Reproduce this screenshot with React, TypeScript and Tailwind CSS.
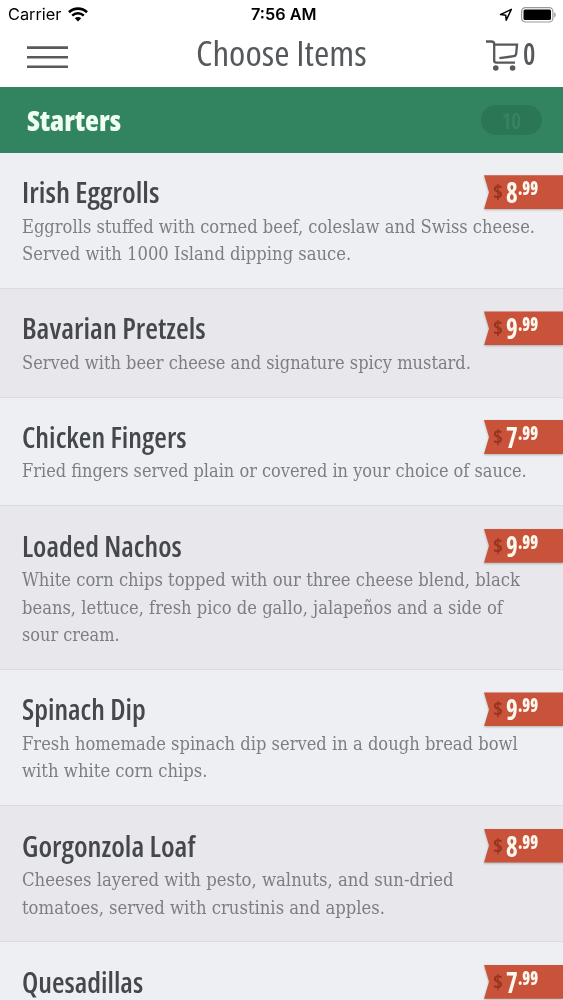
import { useLayoutEffect, useRef, useState } from "react";

type MenuItem = {
  name: string;
  nameWidth: number;
  dollars: string;
  lines: { text: string; width: number }[];
};

const items: MenuItem[] = [
  {
    name: "Irish Eggrolls",
    nameWidth: 137,
    dollars: "8",
    lines: [
      { text: "Eggrolls stuffed with corned beef, coleslaw and Swiss cheese.", width: 513 },
      { text: "Served with 1000 Island dipping sauce.", width: 329 },
    ],
  },
  {
    name: "Bavarian Pretzels",
    nameWidth: 184,
    dollars: "9",
    lines: [
      { text: "Served with beer cheese and signature spicy mustard.", width: 449 },
    ],
  },
  {
    name: "Chicken Fingers",
    nameWidth: 164,
    dollars: "7",
    lines: [
      { text: "Fried fingers served plain or covered in your choice of sauce.", width: 505 },
    ],
  },
  {
    name: "Loaded Nachos",
    nameWidth: 160,
    dollars: "9",
    lines: [
      { text: "White corn chips topped with our three cheese blend, black", width: 498 },
      { text: "beans, lettuce, fresh pico de gallo, jalapeños and a side of", width: 481 },
      { text: "sour cream.", width: 98 },
    ],
  },
  {
    name: "Spinach Dip",
    nameWidth: 124,
    dollars: "9",
    lines: [
      { text: "Fresh homemade spinach dip served in a dough bread bowl", width: 496 },
      { text: "with white corn chips.", width: 186 },
    ],
  },
  {
    name: "Gorgonzola Loaf",
    nameWidth: 173,
    dollars: "8",
    lines: [
      { text: "Cheeses layered with pesto, walnuts, and sun-dried", width: 431 },
      { text: "tomatoes, served with crustinis and apples.", width: 363 },
    ],
  },
  {
    name: "Quesadillas",
    nameWidth: 121,
    dollars: "7",
    lines: [],
  },
];

// Condenses a single line of text to the given width
function FitText({
  text,
  width,
  className = "",
}: {
  text: string;
  width: number;
  className?: string;
}) {
  const ref = useRef<HTMLSpanElement>(null);
  const [scale, setScale] = useState(1);

  useLayoutEffect(() => {
    if (ref.current) setScale(width / ref.current.offsetWidth);
  }, [text, width]);

  return (
    <span className="block" style={{ width }}>
      <span
        ref={ref}
        className={`inline-block origin-left whitespace-nowrap align-top ${className}`}
        style={{ transform: `scaleX(${scale})` }}
      >
        {text}
      </span>
    </span>
  );
}

function StatusBar() {
  return (
    <div className="grid h-[29px] grid-cols-3 items-center pr-[7px] pl-2 font-['Inter',sans-serif] text-[16px] leading-[29px] text-black">
      <div className="flex items-center gap-[7px]">
        <FitText text="Carrier" width={53} />
        <svg width="20" height="15" viewBox="0 0 20 15" fill="none" stroke="#000">
          <path d="M1 5.2a13 13 0 0 1 18 0" strokeWidth="2.7" />
          <path d="M4.2 8.6a8.4 8.4 0 0 1 11.6 0" strokeWidth="2.5" />
          <path d="M6.8 11.2a4.6 4.6 0 0 1 6.4 0L10 14.5Z" fill="#000" stroke="none" />
        </svg>
      </div>
      <div className="flex justify-center pl-1">
        <FitText text="7:56 AM" width={66} className="font-semibold" />
      </div>
      <div className="flex items-center justify-end gap-2">
        <svg width="14" height="14" viewBox="0 0 14 14" fill="none">
          <path d="M1.5 6.6 12.3 1.4 7.2 12.2 6.7 7.2Z" stroke="#000" strokeWidth="1.5" strokeLinejoin="round" />
        </svg>
        <svg width="35" height="16" viewBox="0 0 35 16">
          <rect x="0.6" y="0.6" width="31.3" height="14.4" rx="3.8" fill="none" stroke="#999" strokeWidth="1.2" />
          <rect x="2.5" y="2.5" width="27.5" height="10.6" rx="1.6" fill="#000" />
          <path d="M33.2 5.2c2 .8 2 4.4 0 5.2Z" fill="#999" />
        </svg>
      </div>
    </div>
  );
}

function Header() {
  return (
    <header className="flex h-[58px] items-start justify-between pr-7 pl-[27px] text-[#55595b]">
      <svg className="mt-[17px]" width="41" height="23" viewBox="0 0 41 23" stroke="#58595b" strokeWidth="2.6">
        <path d="M0 1.6h41M0 11.2h41M0 20.7h41" />
      </svg>
      <h1 className="ml-[9px] text-[34px] leading-[48px]">
        <FitText text="Choose Items" width={171} />
      </h1>
      <div className="mt-[9px] flex">
        <svg width="34" height="34" viewBox="0 0 34 34" fill="none" stroke="#55595b" strokeWidth="2.3">
          <path d="M1 3.5h5.2q3 0 3 2.4v16.6q0 2.1 2.2 2.1H30" />
          <path d="M9.2 6.6H32l-.8 8.7q-.3 2.6-2.4 2.9L14.4 20.2" />
          <circle cx="10.8" cy="30" r="2.8" fill="#55595b" stroke="none" />
          <circle cx="27.6" cy="30" r="2.8" fill="#55595b" stroke="none" />
        </svg>
        <div className="ml-1 text-[30px] leading-[31px] font-semibold">
          <FitText text="0" width={12} />
        </div>
      </div>
    </header>
  );
}

function PriceTag({ dollars }: { dollars: string }) {
  return (
    <div className="h-[34px] w-[79px] shrink-0 drop-shadow-[0_1px_1px_rgba(0,0,0,0.25)]">
      <div className="flex h-[34px] items-start bg-[#c9523a] pl-[9px] font-bold text-[#fff8ee] [clip-path:polygon(0_0,100%_0,100%_100%,0_100%,5px_50%)]">
        <div className="text-[19px] leading-[34px] text-[#96341f]">
          <FitText text="$" width={10} />
        </div>
        <div className="ml-[3px] text-[29px] leading-[33px]">
          <FitText text={dollars} width={12} />
        </div>
        <div className="text-[19px] leading-[27px]">
          <FitText text=".99" width={20} className="font-extrabold" />
        </div>
      </div>
    </div>
  );
}

function MenuRow({ item }: { item: MenuItem }) {
  return (
    <li className="shrink-0 border-b border-[#dadbdf] pt-[22.5px] pb-[20.1px] pl-[22px] odd:bg-[#edeff2] even:bg-[#e8e7eb]">
      <div className="flex h-[37.4px] items-start justify-between">
        <h3 className="text-[28px] leading-[35px] font-semibold text-[#44484b]">
          <FitText text={item.name} width={item.nameWidth} />
        </h3>
        <PriceTag dollars={item.dollars} />
      </div>
      <div className="font-['DejaVu_Serif_Condensed','DejaVu_Serif',serif] text-[18.5px] leading-[27.6px] text-[#7b7f85]">
        {item.lines.map((line) => (
          <FitText key={line.text} text={line.text} width={line.width} />
        ))}
      </div>
    </li>
  );
}

export default function App() {
  return (
    <div className="flex h-[1000px] w-[563px] flex-col overflow-hidden bg-white font-['Open_Sans',sans-serif] font-stretch-condensed">
      <StatusBar />
      <Header />
      <div className="flex h-[65.8px] shrink-0 items-center justify-between bg-[#32835f] pr-[21px] pl-[27px]">
        <h2 className="text-[28px] leading-[36px] font-extrabold text-[#effff0]">
          <FitText text="Starters" width={94} />
        </h2>
        <div className="flex h-[30px] w-[61px] items-center justify-center rounded-full bg-[#2b7654] text-[22px] leading-[28px] font-semibold text-[#388462]">
          <FitText text="10" width={20} />
        </div>
      </div>
      <ul className="flex min-h-0 flex-1 flex-col overflow-hidden">
        {items.map((item) => (
          <MenuRow key={item.name} item={item} />
        ))}
      </ul>
    </div>
  );
}
